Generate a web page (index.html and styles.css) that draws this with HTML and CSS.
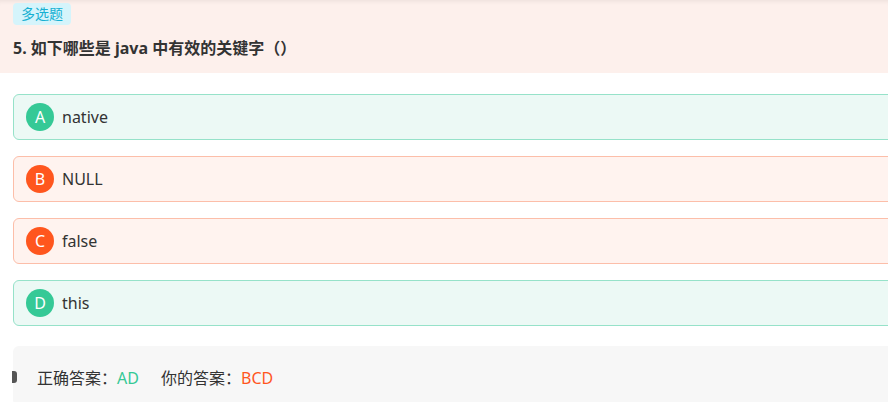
FILE: index.html
```html
<!DOCTYPE html>
<html lang="zh-CN">
<head>
    <meta charset="UTF-8">
    <meta name="viewport" content="width=device-width, initial-scale=1.0">
    <title>多选题</title>
    <link rel="stylesheet" href="styles.css">
</head>
<body>
    <div class="page">
        <header class="question-head">
            <span class="tag">多选题</span>
            <h2 class="question-title">5. 如下哪些是 java 中有效的关键字（）</h2>
        </header>

        <div class="options">
            <div class="option right">
                <span class="letter">A</span>
                <span class="option-text">native</span>
            </div>
            <div class="option wrong">
                <span class="letter">B</span>
                <span class="option-text">NULL</span>
            </div>
            <div class="option wrong">
                <span class="letter">C</span>
                <span class="option-text">false</span>
            </div>
            <div class="option right">
                <span class="letter">D</span>
                <span class="option-text">this</span>
            </div>
        </div>

        <div class="answer-box">
            <span class="answer-label">正确答案：</span><span class="answer-right">AD</span>
            <span class="answer-label mine">你的答案：</span><span class="answer-wrong">BCD</span>
        </div>
    </div>
</body>
</html>
```

FILE: styles.css
```css
* {
    margin: 0;
    padding: 0;
    box-sizing: border-box;
}

html, body {
    overflow: hidden;
}

body {
    font-family: "Noto Sans", "Noto Sans CJK SC", sans-serif;
    background: #fff;
    color: #333;
}

.page {
    width: 100%;
    overflow: hidden;
}

.question-head {
    background: #fdf0ec;
    height: 73px;
    padding: 2px 13px 0;
    box-shadow: inset 0 5px 5px -4px rgba(0, 0, 0, 0.08);
}

.tag {
    display: inline-block;
    height: 22px;
    line-height: 22px;
    padding: 0 8px;
    background: #d5f4fb;
    color: #17b0d2;
    font-size: 14px;
    border-radius: 4px;
}

.question-title {
    margin-top: 10px;
    font-size: 16px;
    font-weight: 700;
    line-height: 26px;
    color: #333;
}

.options {
    padding: 21px 0 0 13px;
    margin-right: -20px;
    display: flex;
    flex-direction: column;
    gap: 16px;
}

.option {
    height: 46px;
    display: flex;
    align-items: center;
    padding-left: 12px;
    border: 1px solid;
    border-radius: 6px;
}

.option.right {
    background: #ecf9f5;
    border-color: #96e2c9;
}

.option.wrong {
    background: #fff3ef;
    border-color: #fcbea9;
}

.letter {
    width: 28px;
    height: 28px;
    border-radius: 50%;
    color: #fff;
    font-size: 16px;
    line-height: 28px;
    text-align: center;
    margin-right: 8px;
}

.right .letter {
    background: #35c996;
}

.wrong .letter {
    background: #ff561e;
}

.option-text {
    font-size: 16px;
    color: #333;
}

.answer-box {
    position: relative;
    margin: 20px -20px 0 13px;
    height: 60px;
    background: #f7f7f7;
    border-radius: 6px;
    padding: 20px 0 0 24px;
    font-size: 16px;
    line-height: 24px;
}

.answer-box::before {
    content: "";
    position: absolute;
    left: -1px;
    top: 25px;
    width: 5px;
    height: 12px;
    background: #555;
    border-radius: 0 3px 3px 0;
}

.answer-label {
    color: #333;
}

.answer-label.mine {
    margin-left: 18px;
}

.answer-right {
    color: #35c996;
}

.answer-wrong {
    color: #ff561e;
}
```
